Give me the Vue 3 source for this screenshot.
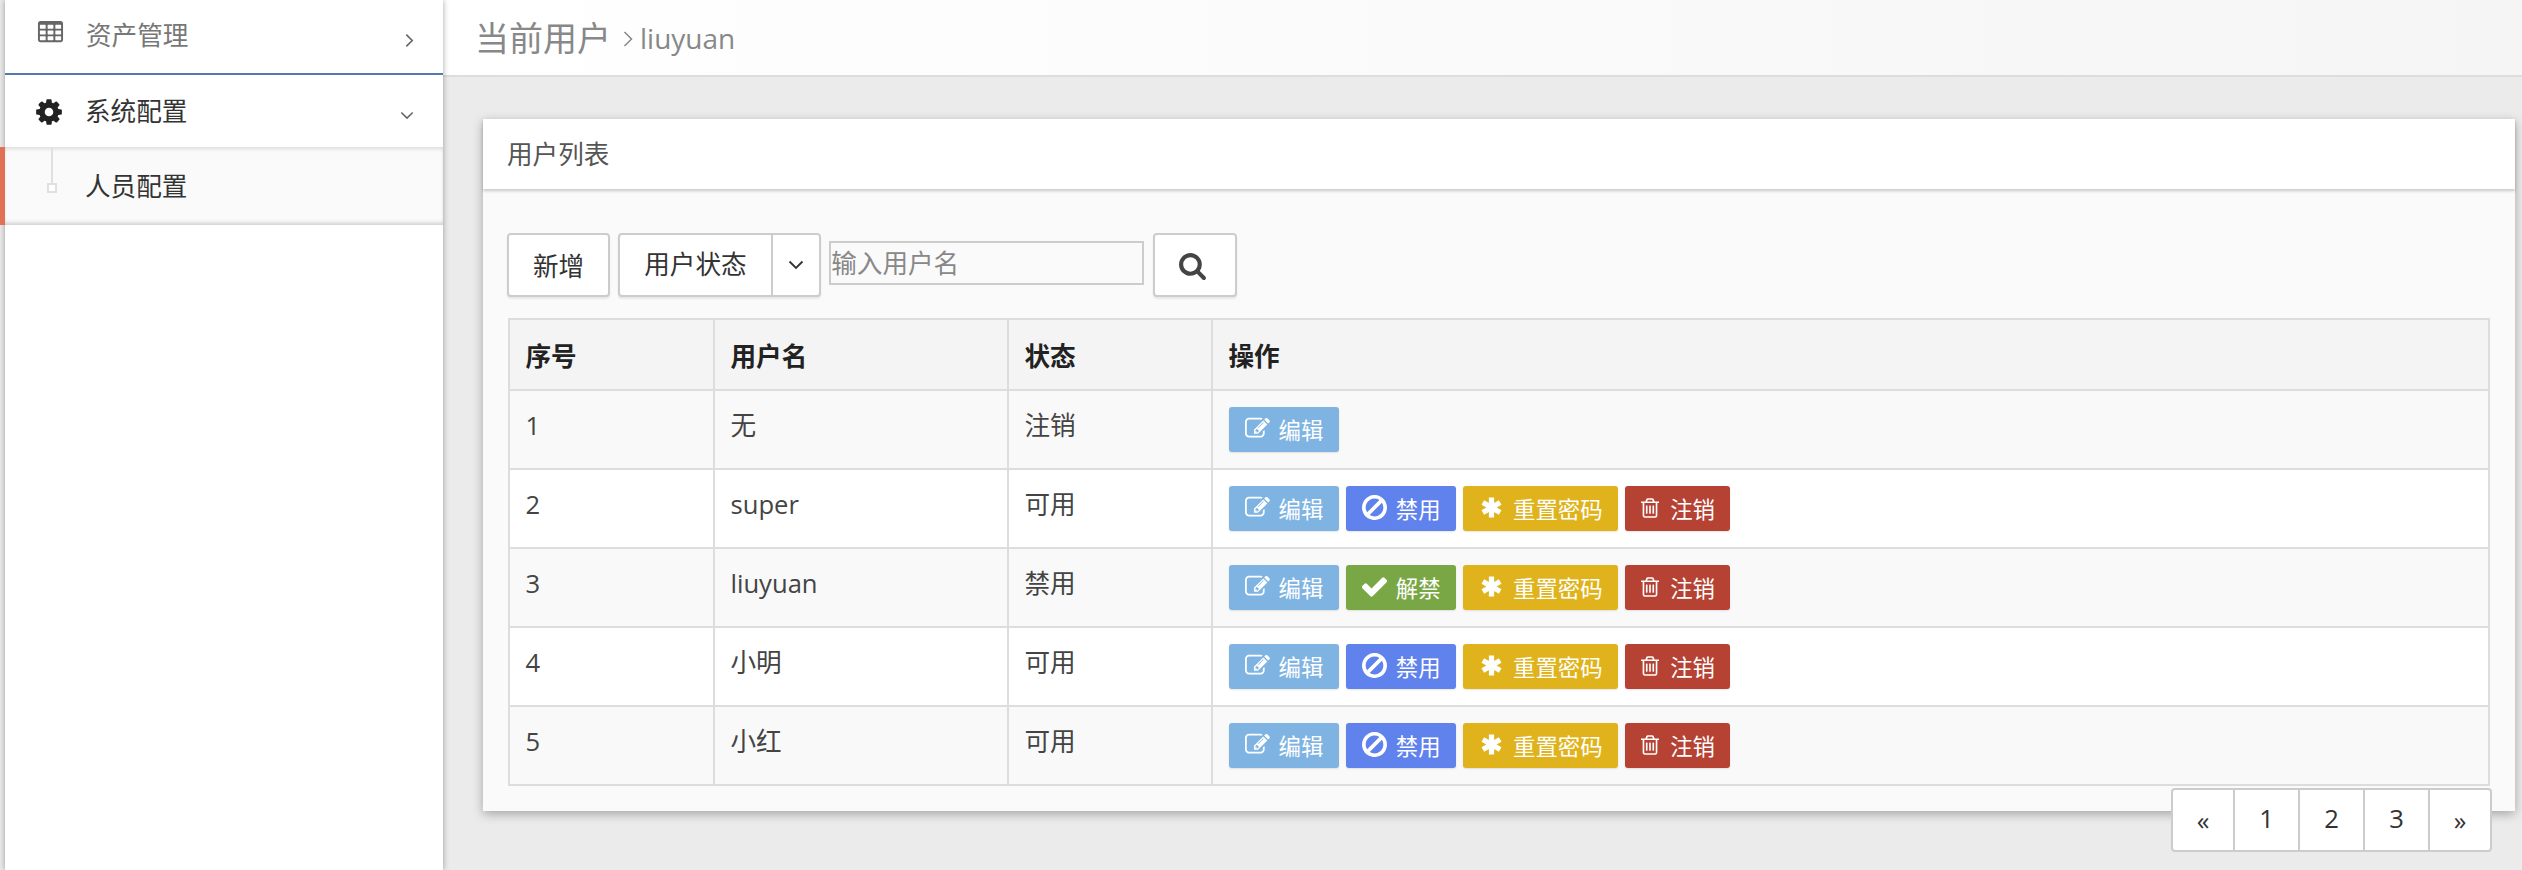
<template>
  <div class="page">
    <aside class="sidebar">
      <div class="menu-item menu-first">
        <svg class="menu-icon" viewBox="0 0 1792 1792"><path :d="icons.table" /></svg>
        <span class="menu-label">资产管理</span>
        <svg class="angle-right" viewBox="0 0 10 16"><path d="M1.500 1.500 8 8l-6.500 6.500" /></svg>
      </div>
      <div class="menu-item menu-open">
        <svg class="menu-icon gear" viewBox="0 0 1792 1792"><path :d="icons.cog" /></svg>
        <span class="menu-label">系统配置</span>
        <svg class="angle-down" viewBox="0 0 16 10"><path d="M1.500 1.500 8 8l6.500-6.500" /></svg>
      </div>
      <div class="submenu">
        <span class="tree-line"></span>
        <span class="tree-node"></span>
        <span class="submenu-label">人员配置</span>
      </div>
    </aside>

    <main class="main">
      <header class="topbar">
        <span class="topbar-title">当前用户</span>
        <svg class="topbar-sep" viewBox="0 0 10 16"><path d="M1.500 1 8.500 8l-7 7" /></svg>
        <span class="topbar-user">liuyuan</span>
      </header>

      <section class="panel">
        <div class="panel-head">用户列表</div>
        <div class="panel-body">
          <div class="toolbar">
            <button class="btn">新增</button>
            <div class="split">
              <span class="split-label">用户状态</span>
              <span class="split-caret">
                <svg viewBox="0 0 16 10"><path d="M1.500 1.500 8 8l6.500-6.500" /></svg>
              </span>
            </div>
            <input class="search-input" type="text" placeholder="输入用户名" />
            <button class="btn btn-search">
              <svg viewBox="0 0 1792 1792"><path :d="icons.search" /></svg>
            </button>
          </div>

          <table class="user-table">
            <colgroup>
              <col class="col-no" />
              <col class="col-name" />
              <col class="col-state" />
              <col />
            </colgroup>
            <thead>
              <tr>
                <th>序号</th>
                <th>用户名</th>
                <th>状态</th>
                <th>操作</th>
              </tr>
            </thead>
            <tbody>
              <tr v-for="user in users" :key="user.id">
                <td>{{ user.id }}</td>
                <td>{{ user.name }}</td>
                <td>{{ user.state }}</td>
                <td>
                  <div class="actions">
                    <button
                      v-for="action in user.actions"
                      :key="action"
                      class="act"
                      :class="actionDefs[action].cls"
                    >
                      <svg class="act-icon" :viewBox="actionDefs[action].box"><path :d="icons[actionDefs[action].icon]" /></svg>
                      {{ actionDefs[action].label }}
                    </button>
                  </div>
                </td>
              </tr>
            </tbody>
          </table>
        </div>
      </section>

      <ul class="pager">
        <li v-for="p in pages" :key="p" :class="{ arrow: p === '«' || p === '»' }">{{ p }}</li>
      </ul>
    </main>
  </div>
</template>

<script setup>
const icons = {
  table: 'M576 1376v-192q0-14-9-23t-23-9h-320q-14 0-23 9t-9 23v192q0 14 9 23t23 9h320q14 0 23-9t9-23zm0-384v-192q0-14-9-23t-23-9h-320q-14 0-23 9t-9 23v192q0 14 9 23t23 9h320q14 0 23-9t9-23zm512 384v-192q0-14-9-23t-23-9h-320q-14 0-23 9t-9 23v192q0 14 9 23t23 9h320q14 0 23-9t9-23zm-512-768v-192q0-14-9-23t-23-9h-320q-14 0-23 9t-9 23v192q0 14 9 23t23 9h320q14 0 23-9t9-23zm512 384v-192q0-14-9-23t-23-9h-320q-14 0-23 9t-9 23v192q0 14 9 23t23 9h320q14 0 23-9t9-23zm512 384v-192q0-14-9-23t-23-9h-320q-14 0-23 9t-9 23v192q0 14 9 23t23 9h320q14 0 23-9t9-23zm-512-768v-192q0-14-9-23t-23-9h-320q-14 0-23 9t-9 23v192q0 14 9 23t23 9h320q14 0 23-9t9-23zm512 384v-192q0-14-9-23t-23-9h-320q-14 0-23 9t-9 23v192q0 14 9 23t23 9h320q14 0 23-9t9-23zm0-384v-192q0-14-9-23t-23-9h-320q-14 0-23 9t-9 23v192q0 14 9 23t23 9h320q14 0 23-9t9-23zm128-320v1088q0 66-47 113t-113 47h-1344q-66 0-113-47t-47-113v-1088q0-66 47-113t113-47h1344q66 0 113 47t47 113z',
  cog: 'M1152 896q0-106-75-181t-181-75-181 75-75 181 75 181 181 75 181-75 75-181zm512-109v222q0 12-8 23t-20 13l-185 28q-19 54-39 91 35 50 107 138 10 12 10 25t-9 23q-27 37-99 108t-94 71q-12 0-26-9l-138-108q-44 23-91 38-16 136-29 186-7 28-36 28h-222q-14 0-24.500-8.500t-11.500-21.500l-28-184q-49-16-90-37l-141 107q-10 9-25 9-14 0-25-11-126-114-165-168-7-10-7-23 0-12 8-23 15-21 51-66.500t54-70.500q-27-50-41-99l-183-27q-13-2-21-12.500t-8-23.500v-222q0-12 8-23t19-13l186-28q14-46 39-92-40-57-107-138-10-12-10-24 0-10 9-23 26-36 98.500-107.500t94.500-71.500q13 0 26 10l138 107q44-23 91-38 16-136 29-186 7-28 36-28h222q14 0 24.500 8.500t11.500 21.500l28 184q49 16 90 37l142-107q9-9 24-9 13 0 25 10 129 119 165 170 7 8 7 22 0 12-8 23-15 21-51 66.500t-54 70.500q26 50 41 98l183 28q13 2 21 12.500t8 23.500z',
  search: 'M1216 832q0-185-131.500-316.500t-316.500-131.500-316.500 131.500-131.500 316.500 131.500 316.500 316.500 131.500 316.500-131.500 131.500-316.500zm512 832q0 52-38 90t-90 38q-54 0-90-38l-343-342q-179 124-399 124-143 0-273.500-55.500t-225-150-150-225-55.500-273.500 55.500-273.500 150-225 225-150 273.500-55.500 273.500 55.500 225 150 150 225 55.500 273.500q0 220-124 399l343 343q37 37 37 90z',
  edit: 'M888 1184l116-116-152-152-116 116v56h96v96h56zm440-720q-16-16-33 1l-350 350q-17 17-1 33t33-1l350-350q17-17 1-33zm80 594v190q0 119-84.500 203.500t-203.500 84.500h-832q-119 0-203.500-84.500t-84.500-203.500v-832q0-119 84.500-203.500t203.500-84.500h832q63 0 117 25 15 7 18 23 3 17-9 29l-49 49q-14 14-32 8-23-6-45-6h-832q-66 0-113 47t-47 113v832q0 66 47 113t113 47h832q66 0 113-47t47-113v-126q0-13 9-22l64-64q15-15 35-7t20 29zm-96-738l288 288-672 672h-288v-288zm444 132l-92 92-288-288 92-92q28-28 68-28t68 28l152 152q28 28 28 68t-28 68z',
  ban: 'M1440 893q0-161-87-295l-754 753q137 89 297 89 111 0 211.500-43.500t173.500-116.500 116-174.500 43-212.500zm-999 299l755-754q-135-91-300-91-148 0-273 73t-198 199-73 274q0 162 89 299zm1223-299q0 157-61 300t-163.500 246-245 164-298.500 61-298.500-61-245-164-163.500-246-61-300 61-299.500 163.500-245.500 245-164 298.500-61 298.500 61 245 164 163.500 245.500 61 299.500z',
  check: 'M1671 566q0 40-28 68l-724 724-136 136q-28 28-68 28t-68-28l-136-136-362-362q-28-28-28-68t28-68l136-136q28-28 68-28t68 28l294 295 656-657q28-28 68-28t68 28l136 136q28 28 28 68z',
  asterisk: 'M696 128h400v1536h-400zM1661 1107l-200 346L131 685l200-346zM1461 339l200 346L331 1453l-200-346z',
  trash: 'M704 736v576q0 14-9 23t-23 9h-64q-14 0-23-9t-9-23v-576q0-14 9-23t23-9h64q14 0 23 9t9 23zm256 0v576q0 14-9 23t-23 9h-64q-14 0-23-9t-9-23v-576q0-14 9-23t23-9h64q14 0 23 9t9 23zm256 0v576q0 14-9 23t-23 9h-64q-14 0-23-9t-9-23v-576q0-14 9-23t23-9h64q14 0 23 9t9 23zm128 724v-948h-896v948q0 22 7 40.500t14.500 27 10.500 8.500h832q3 0 10.500-8.500t14.500-27 7-40.500zm-672-1076h448l-48-117q-7-9-17-11h-317q-10 2-17 11zm928 32v64q0 14-9 23t-23 9h-96v948q0 83-47 143.500t-113 60.500h-832q-66 0-113-58.500t-47-141.500v-952h-96q-14 0-23-9t-9-23v-64q0-14 9-23t23-9h309l70-167q15-37 54-63t79-26h320q40 0 79 26t54 63l70 167h309q14 0 23 9t9 23z'
}

const actionDefs = {
  edit: { label: '编辑', icon: 'edit', cls: 'act-edit', box: '0 0 1792 1792' },
  ban: { label: '禁用', icon: 'ban', cls: 'act-ban', box: '128 125 1536 1536' },
  unban: { label: '解禁', icon: 'check', cls: 'act-unban', box: '128 128 1536 1536' },
  reset: { label: '重置密码', icon: 'asterisk', cls: 'act-reset', box: '-64 -64 1920 1920' },
  remove: { label: '注销', icon: 'trash', cls: 'act-remove', box: '192 128 1408 1536' }
}

const users = [
  { id: 1, name: '无', state: '注销', actions: ['edit'] },
  { id: 2, name: 'super', state: '可用', actions: ['edit', 'ban', 'reset', 'remove'] },
  { id: 3, name: 'liuyuan', state: '禁用', actions: ['edit', 'unban', 'reset', 'remove'] },
  { id: 4, name: '小明', state: '可用', actions: ['edit', 'ban', 'reset', 'remove'] },
  { id: 5, name: '小红', state: '可用', actions: ['edit', 'ban', 'reset', 'remove'] }
]

const pages = ['«', 1, 2, 3, '»']
</script>

<style scoped>
.page {
  display: flex;
  height: 870px;
  overflow: hidden;
  padding-left: 5px;
  box-sizing: border-box;
  background: #ebebeb;
  font-family: "Open Sans", "Noto Sans CJK SC", sans-serif;
  font-size: 25.6px;
  color: #333;
}

/* 左侧菜单 */
.sidebar {
  position: relative;
  z-index: 2;
  flex: 0 0 438px;
  background: #fff;
  box-shadow: 0 0 6px rgba(0, 0, 0, 0.35);
}
.menu-item {
  display: flex;
  align-items: center;
  padding-left: 32px;
  background: #fff;
}
.menu-first {
  height: 73px;
  border-bottom: 2px solid #5379b5;
  color: #777;
}
.menu-open {
  height: 72px;
  color: #333;
}
.menu-icon {
  width: 27px;
  height: 27px;
  fill: #666;
  flex: none;
  margin-top: -8px;
}
.menu-icon.gear {
  width: 30px;
  height: 30px;
  margin: 1px 0 0 -3px;
  fill: #222;
}
.menu-label {
  margin-left: 22px;
  line-height: 36px;
}
.menu-first .menu-label { margin-top: -2px; }
.menu-open .menu-label { margin-left: 21px; margin-top: 2px; }
.angle-right {
  width: 9px;
  height: 15px;
  margin-left: 217px;
  margin-top: 7px;
  fill: none;
  stroke: #666;
  stroke-width: 1.8;
}
.angle-down {
  width: 14px;
  height: 9px;
  margin-left: 213px;
  margin-top: 9px;
  fill: none;
  stroke: #666;
  stroke-width: 1.8;
}
.submenu {
  position: relative;
  height: 78px;
  margin-left: -5px;
  display: flex;
  align-items: center;
  border-left: 5px solid #e07056;
  background: #fafafa;
  box-shadow: inset 0 4px 4px -2px rgba(0, 0, 0, 0.12), inset 0 -4px 4px -2px rgba(0, 0, 0, 0.18);
  box-sizing: border-box;
  padding-left: 80px;
}
.tree-line {
  position: absolute;
  left: 46px;
  top: 0;
  width: 2px;
  height: 36px;
  background: #e0e0e0;
}
.tree-node {
  position: absolute;
  left: 42px;
  top: 36px;
  width: 10px;
  height: 10px;
  box-sizing: border-box;
  border: 2px solid #e0e0e0;
  background: #fff;
}
.submenu-label {
  line-height: 36px;
  margin-top: 2px;
}

/* 右侧内容 */
.main {
  flex: 1;
  min-width: 0;
  display: flex;
  flex-direction: column;
}
.topbar {
  height: 75px;
  flex: none;
  display: flex;
  align-items: center;
  padding-left: 32px;
  background: linear-gradient(to right, #fff, #f5f5f5);
  border-bottom: 2px solid #ddd;
  color: #888;
}
.topbar-title {
  font-size: 34px;
  line-height: 44px;
}
.topbar-sep {
  width: 10px;
  height: 16px;
  margin: 2px 7px 0 12px;
  fill: none;
  stroke: #888;
  stroke-width: 1.5;
}
.topbar-user {
  font-size: 28px;
  line-height: 40px;
}

.panel {
  flex: none;
  margin: 42px 7px 0 40px;
  background: #fafafa;
  box-shadow: 0 3px 10px rgba(0, 0, 0, 0.3);
}
.panel-head {
  height: 70px;
  line-height: 72px;
  padding-left: 24px;
  background: #fff;
  color: #555;
  box-shadow: 0 2px 3px rgba(0, 0, 0, 0.2);
  position: relative;
}
.panel-body {
  padding: 44px 25px 25px 24.500px;
}
.toolbar {
  display: flex;
  align-items: flex-start;
  gap: 8px;
  margin: 0 0 21px -0.500px;
}
.btn {
  height: 64px;
  padding: 0 24px;
  box-sizing: border-box;
  border: 2px solid #ccc;
  border-radius: 4px;
  background: #fff;
  font: inherit;
  color: #333;
  box-shadow: 0 2px 2px rgba(0, 0, 0, 0.08);
}
.split {
  display: flex;
  height: 64px;
  box-sizing: border-box;
  border: 2px solid #ccc;
  border-radius: 4px;
  background: #fff;
  box-shadow: 0 2px 2px rgba(0, 0, 0, 0.08);
}
.split-label {
  width: 153px;
  box-sizing: border-box;
  padding-left: 24px;
  line-height: 60px;
  border-right: 2px solid #ccc;
}
.split-caret {
  width: 46px;
  display: flex;
  align-items: center;
  justify-content: center;
}
.split-caret svg {
  width: 16px;
  height: 10px;
  fill: none;
  stroke: #333;
  stroke-width: 1.8;
}
.search-input {
  width: 315px;
  height: 44px;
  margin-top: 8px;
  padding: 0;
  box-sizing: border-box;
  border: 2px solid #ccc;
  background: #fafafa;
  font: inherit;
  outline: none;
}
.search-input::placeholder {
  color: #888;
}
.btn-search {
  width: 84px;
  margin-left: 1px;
  padding: 0 6px 0 0;
  display: flex;
  align-items: center;
  justify-content: center;
}
.btn-search svg {
  width: 29px;
  height: 29px;
  fill: #444;
}

/* 用户表格 */
.user-table {
  width: 100%;
  table-layout: fixed;
  border-collapse: collapse;
}
.col-no { width: 205px; }
.col-name { width: 294px; }
.col-state { width: 204px; }
.user-table th,
.user-table td {
  border: 2px solid #ddd;
  padding: 0 16px;
  text-align: left;
  box-sizing: border-box;
}
.user-table th {
  height: 71px;
  background: #f4f4f4;
  font-weight: 700;
  color: #222;
}
.user-table td {
  height: 79px;
  padding-top: 15px;
  padding-bottom: 16px;
  line-height: 40px;
  vertical-align: top;
  color: #444;
}
.user-table tbody tr:nth-child(odd) {
  background: #f9f9f9;
}
.user-table tbody tr:nth-child(even) {
  background: #fff;
}
.actions {
  display: flex;
  gap: 7px;
  padding-top: 1px;
}
.act {
  height: 45px;
  padding: 0 15.500px 0 16px;
  display: inline-flex;
  align-items: center;
  gap: 9px;
  border: none;
  border-radius: 3px;
  color: #fff;
  font-family: inherit;
  font-size: 22.4px;
  box-shadow: 0 1px 2px rgba(0, 0, 0, 0.1);
}
.act-icon {
  width: 25px;
  height: 25px;
  margin-top: -2px;
  fill: #fff;
  flex: none;
}
.act-edit { background: #7fb4e2; }
.act-ban { background: #5f82ec; }
.act-unban { background: #79a745; }
.act-reset { background: #e0b31c; }
.act-remove { background: #b54232; }
.act-remove .act-icon {
  width: 18px;
  height: 22px;
  margin-right: 2px;
}

.pager {
  position: relative;
  align-self: flex-end;
  display: flex;
  margin: -23px 30px 0 0;
  padding: 0;
  list-style: none;
  height: 64px;
  box-sizing: border-box;
  border: 2px solid #ccc;
  border-radius: 4px;
  background: #fff;
}
.pager li {
  width: 65px;
  box-sizing: border-box;
  border-left: 2px solid #ccc;
  text-align: center;
  line-height: 58px;
}
.pager li:first-child {
  border-left: none;
  width: 60px;
}
.pager li:last-child {
  width: 62px;
}
.pager li.arrow {
  line-height: 62px;
}
</style>

<style>
html, body {
  margin: 0;
  background: #ebebeb;
}
</style>
